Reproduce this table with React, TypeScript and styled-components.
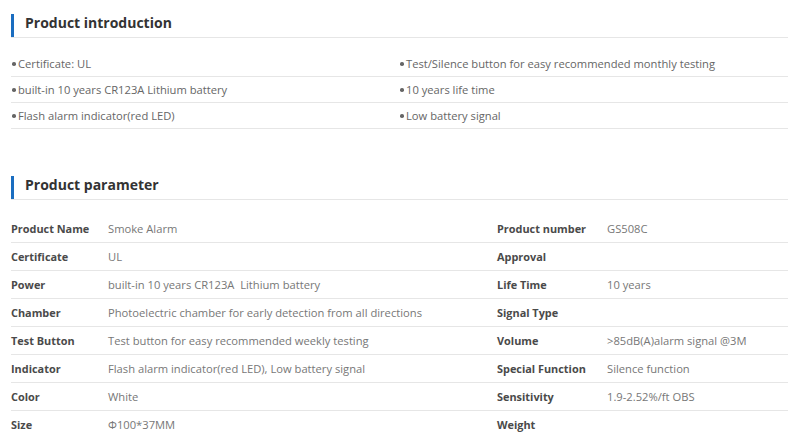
import React from "react";
import styled, { createGlobalStyle } from "styled-components";

const Global = createGlobalStyle`
  html, body { margin: 0; padding: 0; background: #fff; }
  body { font-family: "Open Sans", "Noto Sans", sans-serif; }
`;

const Page = styled.div`
  width: 777px;
  padding: 14px 0 0 11px;
  display: flex;
  flex-direction: column;
`;

const Section = styled.section<{ $gap: number }>`
  display: flex;
  flex-direction: column;
  margin-bottom: ${(p) => p.$gap}px;
`;

const TitleBar = styled.div`
  border-bottom: 1px solid #e6e6e6;
  display: flex;
  align-items: stretch;
  height: 23px;
`;

const Title = styled.h2`
  margin: 0;
  border-left: 3px solid #1a6dc0;
  padding-left: 11px;
  font-size: 14px;
  font-weight: 700;
  color: #333;
  line-height: 18px;
`;

const IntroGrid = styled.ul`
  list-style: none;
  margin: 13px 0 0;
  padding: 0;
  display: grid;
  grid-template-columns: 388px 1fr;
`;

const IntroItem = styled.li`
  height: 25px;
  border-bottom: 1px solid #e6e6e6;
  display: flex;
  align-items: center;
  font-size: 11.2px;
  color: #666;
  &::before {
    content: "";
    width: 3.5px;
    height: 3.5px;
    border-radius: 50%;
    background: #666;
    margin: 1px 2.5px 0 1px;
  }
`;

const ParamGrid = styled.div`
  margin-top: 15px;
  display: grid;
  grid-template-columns: 97px 389px 110px 1fr;
`;

const Cell = styled.div<{ $label?: boolean }>`
  height: 27px;
  border-bottom: 1px solid #e6e6e6;
  display: flex;
  align-items: center;
  white-space: nowrap;
  font-size: ${(p) => (p.$label ? "10.9px" : "11.2px")};
  color: ${(p) => (p.$label ? "#4a4a4a" : "#777")};
  font-weight: ${(p) => (p.$label ? 700 : 400)};
`;

const intro = [
  "Certificate: UL",
  "Test/Silence button for easy recommended monthly testing",
  "built-in 10 years CR123A Lithium battery",
  "10 years life time",
  "Flash alarm indicator(red LED)",
  "Low battery signal",
];

const params: [string, string, string, string][] = [
  ["Product Name", "Smoke Alarm", "Product number", "GS508C"],
  ["Certificate", "UL", "Approval", ""],
  ["Power", "built-in 10 years CR123A\u00a0 Lithium battery", "Life Time", "10 years"],
  ["Chamber", "Photoelectric chamber for early detection from all directions", "Signal Type", ""],
  ["Test Button", "Test button for easy recommended weekly testing", "Volume", ">85dB(A)alarm signal @3M"],
  ["Indicator", "Flash alarm indicator(red LED), Low battery signal", "Special Function", "Silence function"],
  ["Color", "White", "Sensitivity", "1.9-2.52%/ft OBS"],
  ["Size", "\u03a6100*37MM", "Weight", ""],
];

export default function App() {
  return (
    <>
      <Global />
      <Page>
        <Section $gap={47}>
          <TitleBar>
            <Title>Product introduction</Title>
          </TitleBar>
          <IntroGrid>
            {intro.map((t) => (
              <IntroItem key={t}>{t}</IntroItem>
            ))}
          </IntroGrid>
        </Section>
        <Section $gap={0}>
          <TitleBar>
            <Title>Product parameter</Title>
          </TitleBar>
          <ParamGrid>
            {params.map((r) =>
              r.map((c, i) => (
                <Cell key={r[0] + i} $label={i % 2 === 0}>
                  {c}
                </Cell>
              ))
            )}
          </ParamGrid>
        </Section>
      </Page>
    </>
  );
}
